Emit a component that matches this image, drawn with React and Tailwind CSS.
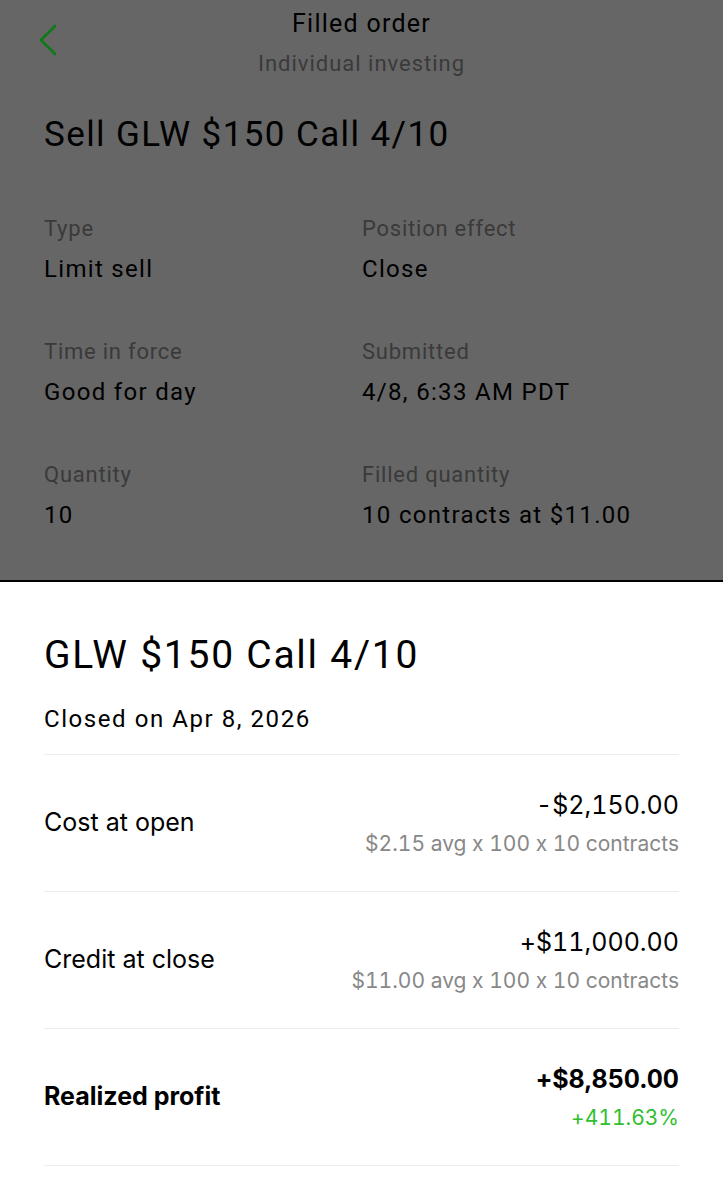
const details = [
  { label: "Type", value: "Limit sell" },
  { label: "Position effect", value: "Close" },
  { label: "Time in force", value: "Good for day" },
  { label: "Submitted", value: "4/8, 6:33 AM PDT" },
  { label: "Quantity", value: "10" },
  { label: "Filled quantity", value: "10 contracts at $11.00" },
];

const rows = [
  { label: "Cost at open", value: "-$2,150.00", sub: "$2.15 avg x 100 x 10 contracts" },
  { label: "Credit at close", value: "+$11,000.00", sub: "$11.00 avg x 100 x 10 contracts" },
  { label: "Realized profit", value: "+$8,850.00", sub: "+411.63%", bold: true },
];

function BackChevron() {
  return (
    <svg width="22" height="32" viewBox="0 0 22 32" fill="none">
      <polyline points="18,2 4,16 18,30" stroke="#0b7a17" strokeWidth="2.6" strokeLinecap="round" strokeLinejoin="round" />
    </svg>
  );
}

export default function App() {
  return (
    <div className="w-[723px] h-[1200px] overflow-hidden bg-white">
      {/* dimmed order screen behind the sheet */}
      <div className="h-[580px] bg-[#666666] px-11 font-['Roboto',sans-serif]">
        <div className="relative pt-2 flex flex-col items-center">
          <div className="absolute left-[-7px] top-[24px]">
            <BackChevron />
          </div>
          <p className="text-[25px] leading-[32px] tracking-[0.05em] text-black">Filled order</p>
          <p className="mt-[10px] text-[22px] leading-[28px] tracking-[0.045em] text-[#3a3a3a]">Individual investing</p>
        </div>
        <h1 className="mt-[37px] text-[35px] leading-[40px] tracking-[0.04em] text-black">Sell GLW $150 Call 4/10</h1>
        <div className="mt-[60px] grid grid-cols-[318px_1fr] gap-y-[54px]">
          {details.map((d) => (
            <div key={d.label}>
              <p className="text-[22px] leading-[28px] tracking-[0.035em] text-[#3a3a3a]">{d.label}</p>
              <p className="mt-[11px] text-[24px] leading-[30px] tracking-[0.055em] text-black">{d.value}</p>
            </div>
          ))}
        </div>
      </div>

      {/* bottom sheet */}
      <div className="border-t-2 border-black bg-white px-11">
        <h2 className="pt-[50px] font-['Roboto',sans-serif] text-[39px] leading-[46px] tracking-[0.045em] text-black">GLW $150 Call 4/10</h2>
        <p className="mt-[26px] font-['Roboto',sans-serif] text-[24px] leading-[30px] tracking-[0.065em] text-black">Closed on Apr 8, 2026</p>
        <div className="mt-5 border-t border-[#ececec] font-['Inter',sans-serif] [font-feature-settings:'calt'_0]">
          {rows.map((r) => (
            <div key={r.label} className="h-[137px] flex items-center justify-between border-b border-[#ececec]">
              <span className={r.bold ? "text-[25px] font-bold text-black" : "text-[25px] text-black"}>{r.label}</span>
              <div className="flex flex-col items-end gap-[11px] tabular-nums">
                <span className={r.bold ? "text-[25px] leading-[30px] font-bold text-black" : "text-[25px] leading-[30px] text-black"}>{r.value}</span>
                <span className={r.bold ? "text-[21px] leading-[26px] text-[#2fbf2f]" : "text-[21px] leading-[26px] text-[#888888]"}>{r.sub}</span>
              </div>
            </div>
          ))}
        </div>
      </div>
    </div>
  );
}
